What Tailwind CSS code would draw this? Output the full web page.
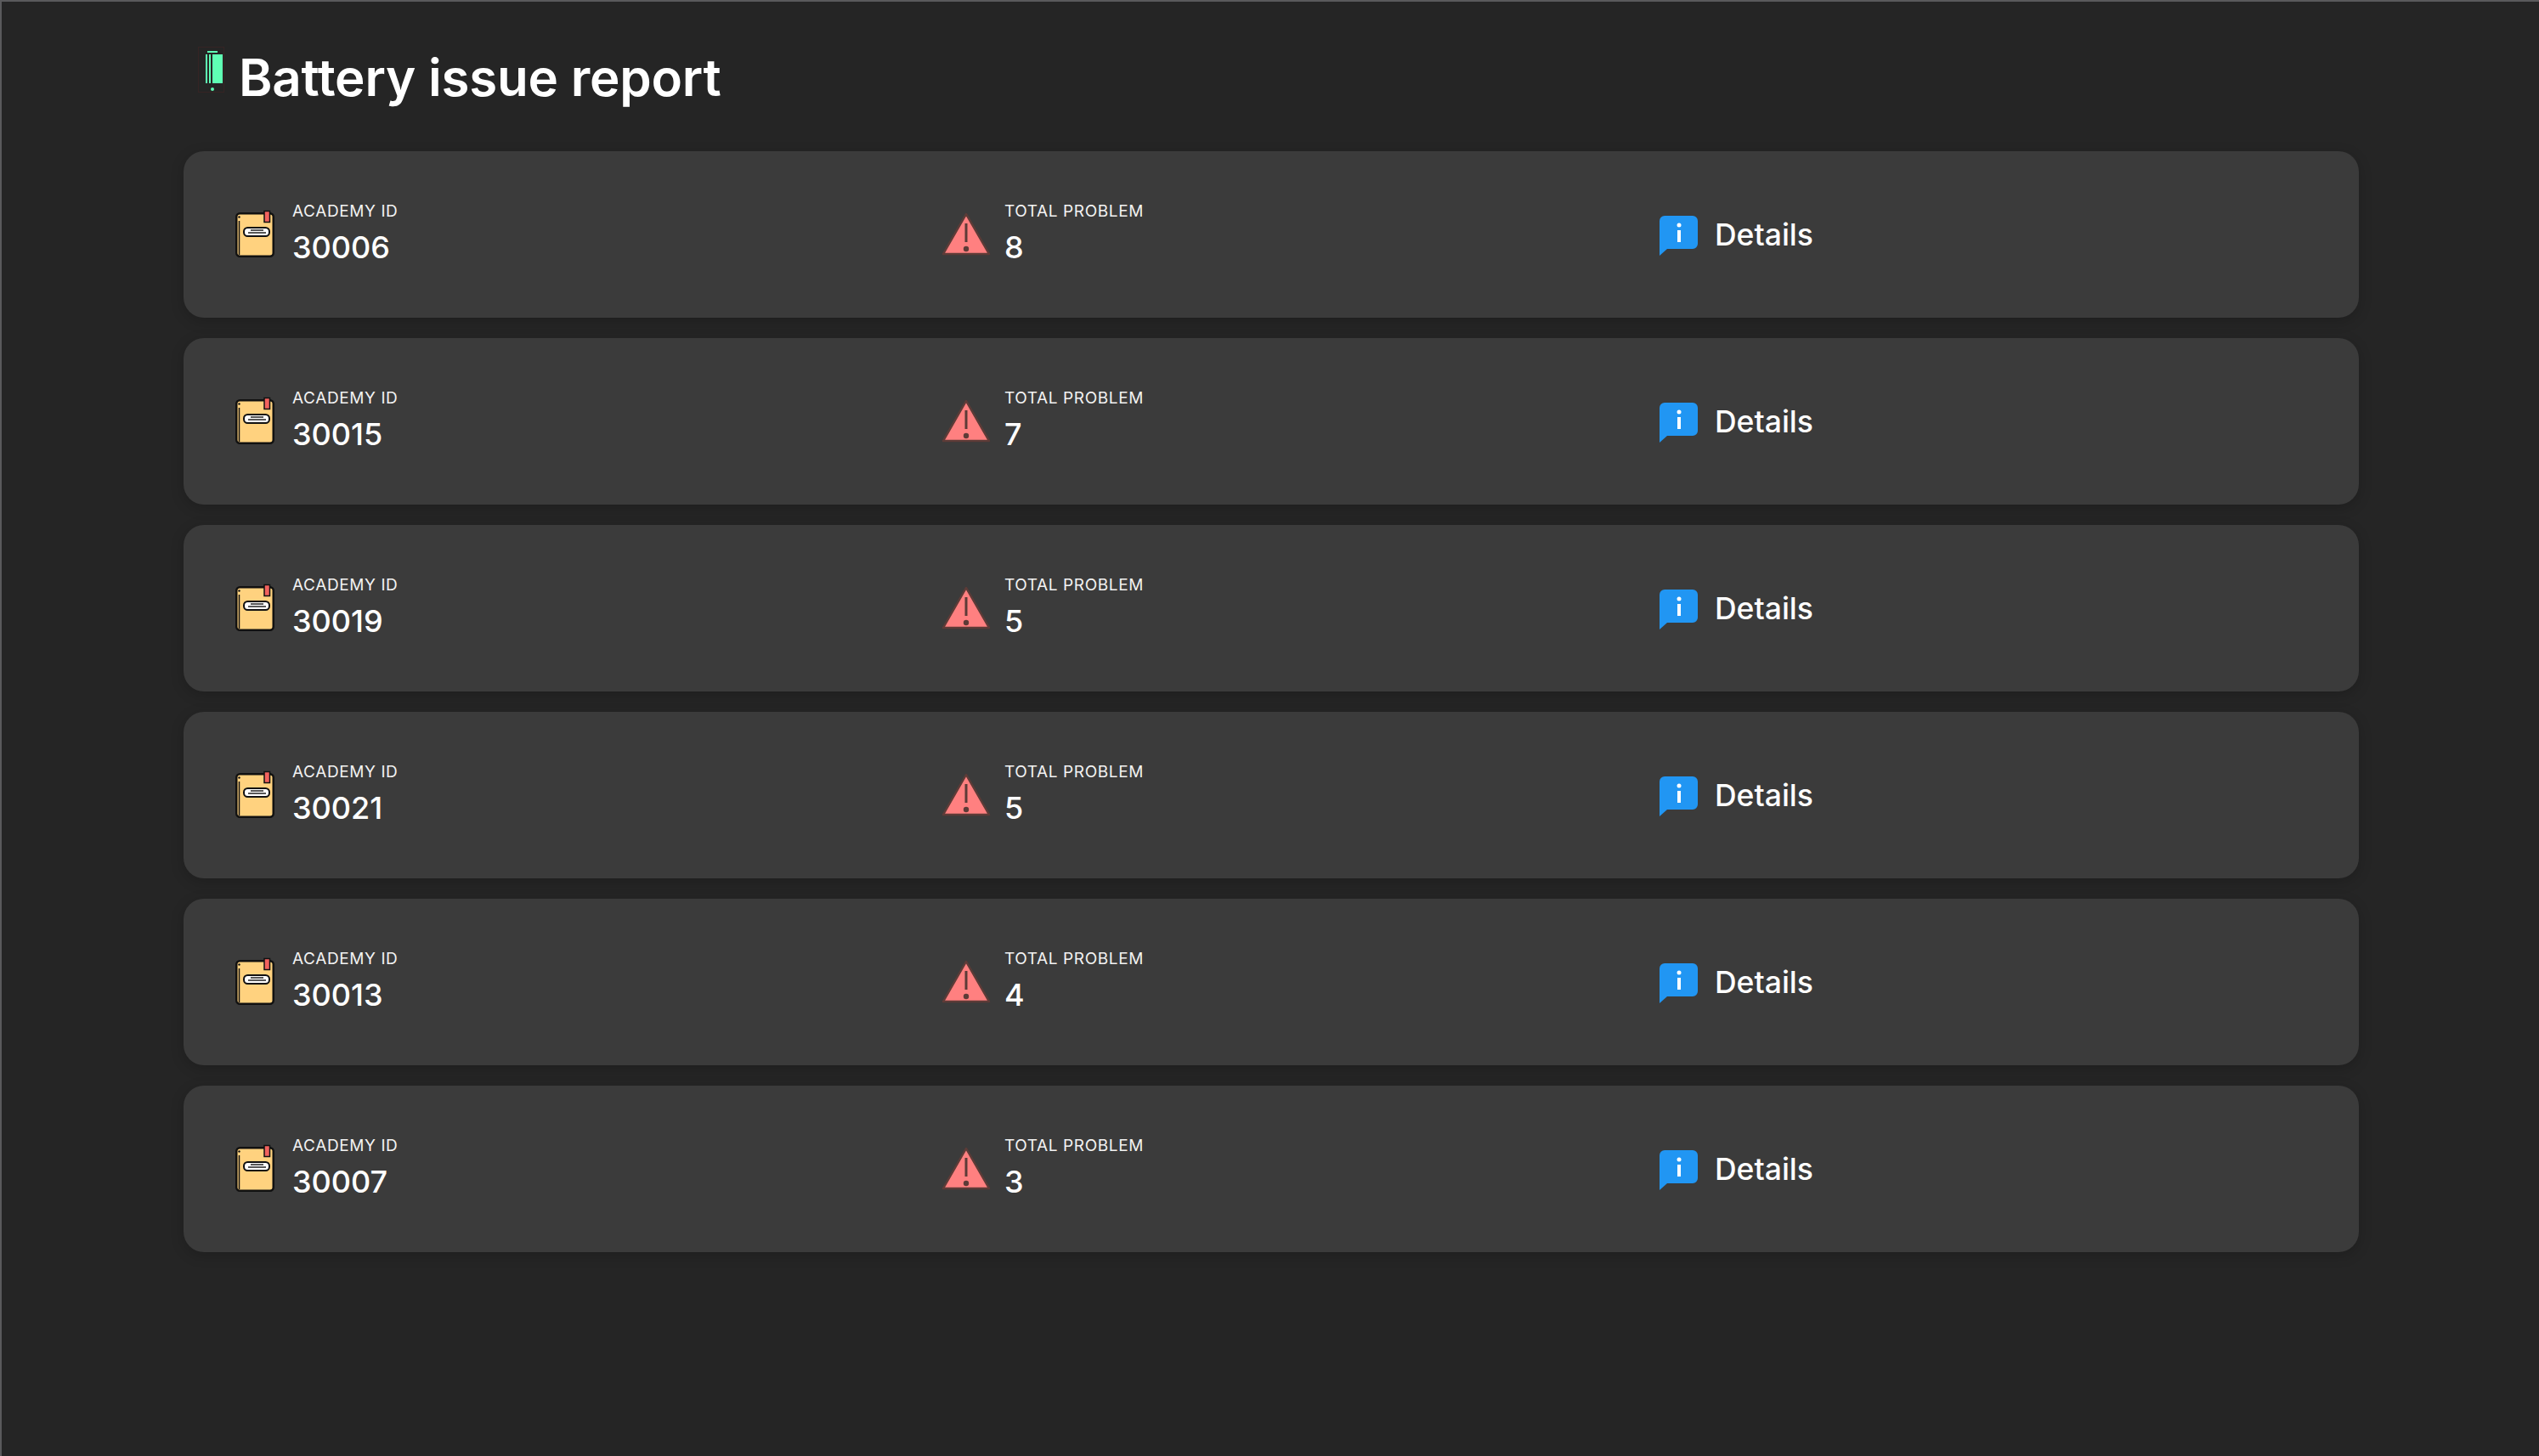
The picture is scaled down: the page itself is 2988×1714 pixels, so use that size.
<!DOCTYPE html>
<html lang="en">

<head>
    <meta charset="UTF-8">
    <title>Battery issue report</title>
    <script src="https://cdn.jsdelivr.net/npm/@tailwindcss/browser@4"></script>
</head>

<body class="bg-[#252525] font-['Inter',sans-serif] text-white overflow-hidden">
    <div class="h-screen border-t-2 border-l-2 border-[#5a5a5c] pl-[214px] pr-[212px] overflow-hidden">

        <div class="flex items-start h-[176px]">
            <svg class="ml-[17px] mt-[53px]" width="32" height="56" viewBox="0 0 32 56" fill="none">
                <rect x="0.5" y="0.5" width="30" height="53" stroke="#352424" />
                <rect x="11" y="5" width="12" height="2" fill="#5fffb4" />
                <rect x="9" y="9" width="2" height="34" fill="#5fffb4" />
                <rect x="13" y="9" width="2" height="34" fill="#5fffb4" />
                <rect x="17" y="9" width="12" height="34" fill="#5fffb4" />
                <circle cx="17" cy="50" r="2" fill="#5fffb4" />
            </svg>
            <h1 class="ml-[16px] mt-[49px] text-[60px] leading-[80px] font-semibold tracking-[-0.2px]">Battery issue report</h1>
        </div>

        <div id="rows" class="flex flex-col gap-[24px]"></div>
    </div>

    <script>
        const rows = [
            ["30006", 8],
            ["30015", 7],
            ["30019", 5],
            ["30021", 5],
            ["30013", 4],
            ["30007", 3],
        ];

        const bookIcon = `
            <svg width="50" height="58" viewBox="0 0 50 58" fill="none">
                <rect x="2.25" y="4.25" width="43.5" height="50.5" rx="4" fill="#ffd27f" stroke="#111" stroke-width="2.5" />
                <rect x="35" y="1.5" width="6.5" height="13" fill="#f2625e" stroke="#111" stroke-width="1.5" />
                <path d="M5.5 13V53" stroke="#111" stroke-width="1.5" />
                <circle cx="5.5" cy="8.5" r="1.2" fill="#111" />
                <rect x="11" y="21" width="30" height="10" rx="4.5" fill="#fff" stroke="#111" stroke-width="2" />
                <path d="M19 24H34M16 27H37" stroke="#222" stroke-width="1.5" />
            </svg>`;

        const warnIcon = `
            <svg width="60" height="52" viewBox="0 0 60 52" fill="none">
                <path d="M30 2L57 49H3Z" fill="#ff8080" stroke="#5d3b37" stroke-width="2.5" stroke-linejoin="round" />
                <path d="M30 13V35" stroke="#5d3b37" stroke-width="3" />
                <circle cx="30" cy="43" r="3.2" fill="#5d3b37" />
            </svg>`;

        const infoIcon = `
            <svg class="mt-[4px]" width="46" height="48" viewBox="0 0 46 48" fill="none">
                <path d="M6 0H39A6 6 0 0 1 45 6V33A6 6 0 0 1 39 39H9L0 47V6A6 6 0 0 1 6 0Z" fill="#2196f3" />
                <rect x="21" y="17" width="4" height="14" fill="#fff" />
                <circle cx="23" cy="11" r="2.5" fill="#fff" />
            </svg>`;

        document.getElementById("rows").innerHTML = rows.map(([id, total]) => `
            <div class="flex items-center h-[196px] rounded-[24px] bg-[#3b3b3b] shadow-[0_4px_16px_rgba(0,0,0,0.18)] pl-[60px]">
                <div class="flex items-center gap-[18px] w-[831px]">
                    ${bookIcon}
                    <div class="pb-[2px]">
                        <div class="text-[19px] leading-[26px] tracking-[0.6px] text-[#f2f2f2]">ACADEMY ID</div>
                        <div class="mt-[6px] text-[36px] leading-[46px] font-medium">${id}</div>
                    </div>
                </div>
                <div class="flex items-center gap-[15px] w-[846px]">
                    ${warnIcon}
                    <div class="pb-[2px]">
                        <div class="text-[19px] leading-[26px] tracking-[0.6px] text-[#f2f2f2]">TOTAL PROBLEM</div>
                        <div class="mt-[6px] text-[36px] leading-[46px] font-medium">${total}</div>
                    </div>
                </div>
                <div class="flex items-center gap-[19px]">
                    ${infoIcon}
                    <span class="pt-[1px] text-[35.5px] leading-[46px] font-medium">Details</span>
                </div>
            </div>`).join("");
    </script>
</body>

</html>
